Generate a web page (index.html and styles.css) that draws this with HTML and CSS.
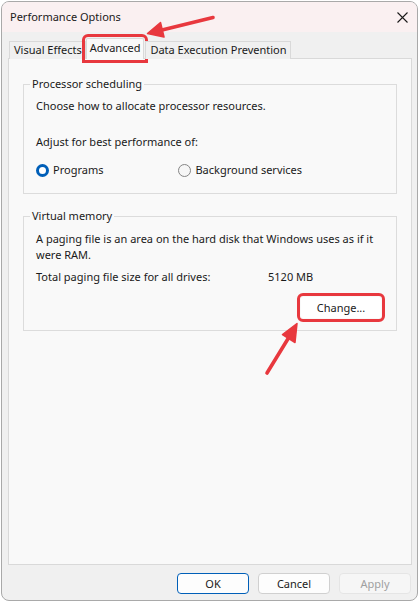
FILE: index.html
```html
<!DOCTYPE html>
<html>
<head>
<meta charset="utf-8">
<link rel="stylesheet" href="styles.css">
</head>
<body>
<div class="window">
  <div class="titlebar">
    <span class="title">Performance Options</span>
    <svg class="close" width="11" height="11" viewBox="0 0 11 11"><path d="M0.5 0.5L10.5 10.5M10.5 0.5L0.5 10.5" stroke="#1a1a1a" stroke-width="1.1" fill="none"/></svg>
  </div>
  <div class="content">
    <div class="tabs">
      <div class="tab">Visual Effects</div>
      <div class="tab selected highlight">Advanced</div>
      <div class="tab">Data Execution Prevention</div>
    </div>
    <div class="panel">
      <fieldset class="group group-cpu">
        <legend>Processor scheduling</legend>
        <div class="line first">Choose how to allocate processor resources.</div>
        <div class="line adjust">Adjust for best performance of:</div>
        <div class="radios">
          <label class="radio"><span class="dot on"></span>Programs</label>
          <label class="radio second"><span class="dot"></span>Background services</label>
        </div>
      </fieldset>
      <fieldset class="group group-vm">
        <legend>Virtual memory</legend>
        <div class="line first">A paging file is an area on the hard disk that Windows uses as if it<br>were RAM.</div>
        <div class="line total"><span class="label">Total paging file size for all drives:</span><span>5120 MB</span></div>
        <div class="change-row"><button class="btn change highlight">Change...</button></div>
      </fieldset>
    </div>
    <div class="buttons">
      <button class="btn primary">OK</button>
      <button class="btn">Cancel</button>
      <button class="btn disabled">Apply</button>
    </div>
  </div>
</div>
<svg class="arrows" width="419" height="602" viewBox="0 0 419 602">
  <g fill="#e8383e" stroke="#e8383e" stroke-linecap="round" stroke-linejoin="round">
    <line x1="213" y1="17.5" x2="160" y2="30.5" stroke-width="3.6"/>
    <polygon points="147.5,33.5 164,37 160.5,22.5" stroke-width="1.5"/>
    <line x1="267" y1="373" x2="290" y2="335.5" stroke-width="3.6"/>
    <polygon points="297,323.5 295,342.5 282.5,334.5" stroke-width="1.5"/>
  </g>
</svg>
</body>
</html>
```
FILE: styles.css
```css
html, body {
  margin: 0;
  padding: 0;
  background: #ffffff;
}
body {
  font-family: "Noto Sans", "Open Sans", sans-serif;
  font-size: 11px;
  color: #1a1a1a;
  width: 419px;
  height: 602px;
  overflow: hidden;
  position: relative;
}
.window {
  box-sizing: border-box;
  width: 417px;
  height: 600px;
  margin: 1px 0 0 1px;
  border: 1px solid #a9a9a9;
  border-radius: 8px;
  background: #f0f0f0;
  overflow: hidden;
  display: flex;
  flex-direction: column;
}
.titlebar {
  height: 30px;
  flex: none;
  background: #faf0f1;
  display: flex;
  align-items: center;
  justify-content: space-between;
  padding: 0 9px 0 8px;
}
.title {
  font-size: 11px;
  line-height: 16px;
}
.close {
  display: block;
}
.content {
  flex: 1;
  display: flex;
  flex-direction: column;
  padding: 6px 5px 0 6px;
}
.tabs {
  display: flex;
  align-items: flex-end;
  height: 21px;
  padding-left: 1px;
  position: relative;
  z-index: 1;
  margin-bottom: -1px;
}
.tab {
  box-sizing: border-box;
  height: 18px;
  line-height: 16px;
  padding: 0 3px 0 4px;
  border: 1px solid #d9d9d9;
  border-bottom: none;
  background: #f0f0f0;
  margin-right: -1px;
}
.tab.selected {
  height: 21px;
  line-height: 18px;
  background: #f9f9f9;
  padding: 0 3px;
  margin: 0 1px 0 1px;
}
.highlight {
  outline: 3px solid #e8383e;
  outline-offset: 1px;
  border-radius: 3px;
}
.tab.highlight {
  border-radius: 2px 2px 0 0;
  outline-offset: 1px;
}
.panel {
  box-sizing: border-box;
  height: 507px;
  flex: none;
  background: #f9f9f9;
  border: 1px solid #d9d9d9;
  padding: 17px 14px 0 14px;
  display: flex;
  flex-direction: column;
}
.group {
  box-sizing: border-box;
  margin: 0;
  border: 1px solid #dcdcdc;
  padding: 0 12px;
  min-width: 0;
}
.group legend {
  padding: 0 2px;
  margin-left: -6px;
  line-height: 16px;
}
.group-cpu {
  height: 118px;
}
.group-vm {
  height: 123px;
  margin-top: 14px;
}
.line {
  line-height: 16px;
}
.group-cpu .first {
  margin-top: 6px;
}
.adjust {
  margin-top: 20px;
}
.radios {
  display: flex;
  margin-top: 12px;
  line-height: 16px;
}
.radio {
  display: flex;
  align-items: center;
  gap: 4px;
}
.radio.second {
  margin-left: 75px;
}
.dot {
  box-sizing: border-box;
  width: 13px;
  height: 13px;
  border-radius: 50%;
  border: 1px solid #858585;
  background: #f6f6f6;
}
.dot.on {
  border: 3.5px solid #005fb8;
  background: #ffffff;
}
.group-vm .first {
  margin-top: 7px;
}
.total {
  margin-top: 6px;
  display: flex;
}
.total .label {
  width: 232px;
}
.change-row {
  display: flex;
  justify-content: flex-end;
  margin-top: 12px;
  padding-right: 3px;
}
.btn {
  box-sizing: border-box;
  font-family: inherit;
  font-size: 11px;
  color: #1a1a1a;
  height: 21px;
  width: 72px;
  padding: 0;
  line-height: 18px;
  background: #fdfdfd;
  border: 1px solid #d0d0d0;
  border-radius: 4px;
}
.btn.change {
  width: 80px;
  height: 21px;
  border-radius: 2px;
  border-color: #ffffff;
  background: #ffffff;
}
.buttons {
  display: flex;
  justify-content: flex-end;
  gap: 9px;
  margin-top: 8px;
  padding-right: 1px;
}
.btn.primary {
  border-color: #005fb8;
}
.btn.disabled {
  color: #a0a0a0;
  background: #f6f6f6;
  border-color: #e5e5e5;
}
.arrows {
  position: absolute;
  left: 0;
  top: 0;
  pointer-events: none;
}
```
